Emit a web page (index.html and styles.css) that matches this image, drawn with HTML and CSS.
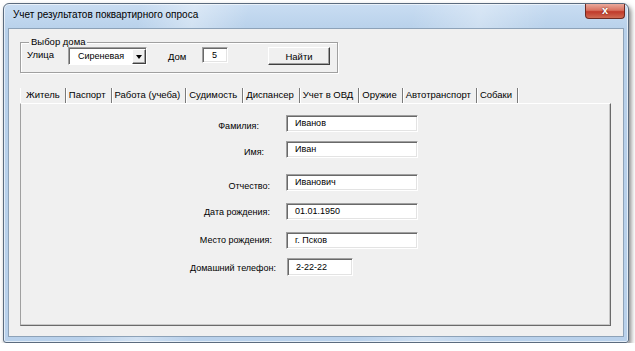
FILE: index.html
```html
<!DOCTYPE html>
<html lang="ru">
<head>
  <meta charset="UTF-8">
  <title>Учет результатов поквартирного опроса</title>
  <link rel="stylesheet" href="styles.css">
</head>
<body>
  <div class="window">
    <div class="titlebar">
      <span class="title">Учет результатов поквартирного опроса</span>
      <span class="close">x</span>
    </div>
    <div class="client">
      <!-- Выбор дома -->
      <div class="groupbox">
        <span class="groupbox-caption">Выбор дома</span>
        <div class="groupbox-row">
          <span class="lbl street-lbl">Улица</span>
          <div class="combo">
            <span class="combo-text">Сиреневая</span>
            <span class="combo-btn"><span class="arrow"></span></span>
          </div>
          <span class="lbl house-lbl">Дом</span>
          <div class="field house-field">5</div>
          <button class="btn find-btn">Найти</button>
        </div>
      </div>

      <!-- вкладки -->
      <div class="tabs">
        <span class="tab tab-first">Житель</span>
        <span class="tab">Паспорт</span>
        <span class="tab">Работа (учеба)</span>
        <span class="tab">Судимость</span>
        <span class="tab">Диспансер</span>
        <span class="tab">Учет в ОВД</span>
        <span class="tab">Оружие</span>
        <span class="tab">Автотранспорт</span>
        <span class="tab">Собаки</span>
      </div>
      <div class="tab-page">
        <div class="form-grid">
          <span class="lbl form-lbl lbl-surname">Фамилия:</span>
          <div class="field form-field">Иванов</div>

          <span class="lbl form-lbl lbl-name">Имя:</span>
          <div class="field form-field">Иван</div>

          <span class="lbl form-lbl lbl-patronymic">Отчество:</span>
          <div class="field form-field">Иванович</div>

          <span class="lbl form-lbl lbl-dob">Дата рождения:</span>
          <div class="field form-field">01.01.1950</div>

          <span class="lbl form-lbl lbl-pob">Место рождения:</span>
          <div class="field form-field">г. Псков</div>

          <span class="lbl form-lbl lbl-phone">Домашний телефон:</span>
          <div class="field form-field phone-field">2-22-22</div>
        </div>
      </div>
    </div>
  </div>
</body>
</html>
```

FILE: styles.css
```css
* {
  box-sizing: border-box;
}

body {
  margin: 0;
  background: #fff;
  font-family: "Liberation Sans", Arial, sans-serif;
  font-size: 9px;
  color: #000;
}

/* рамка окна в стиле Windows 7 */
.window {
  margin: 3px 0 0 3px;
  width: 626px;
  height: 340px;
  display: flex;
  flex-direction: column;
  padding: 0 4px 5px 4px;
  border: 1px solid #5b6b7e;
  border-radius: 6px 6px 3px 3px;
  background:
    linear-gradient(100deg, rgba(255,255,255,0) 20%, rgba(255,255,255,.35) 28%, rgba(255,255,255,0) 36%, rgba(255,255,255,0) 60%, rgba(255,255,255,.3) 70%, rgba(255,255,255,0) 80%),
    linear-gradient(180deg, #c9ddf2 0%, #b7d0ea 8%, #b9d1eb 100%);
  box-shadow: 2px 3px 5px rgba(0, 0, 0, 0.5), inset 0 0 0 1px rgba(255,255,255,.6);
}

.titlebar {
  height: 24px;
  display: flex;
  align-items: flex-start;
  padding-left: 5px;
}

.title {
  line-height: 22px;
  font-size: 10px;
}

.close {
  margin-left: auto;
  margin-right: -1px;
  width: 40px;
  height: 15px;
  border: 1px solid #6e2a22;
  border-top: none;
  border-radius: 0 0 4px 4px;
  background: linear-gradient(180deg, #e9a99c 0%, #d8715f 45%, #c0392a 55%, #cf6a52 100%);
  color: #fff;
  font-weight: bold;
  font-size: 11px;
  line-height: 12px;
  text-align: center;
  text-shadow: 0 0 2px #5a1a12;
}

.client {
  flex: 1;
  display: flex;
  flex-direction: column;
  background: #f0f0f0;
  border: 1px solid #8da2b8;
}

/* группа "Выбор дома" */
.groupbox {
  position: relative;
  margin: 13px 0 0 11px;
  width: 318px;
  height: 31px;
  border: 1px solid #a0a0a0;
  box-shadow: inset 1px 1px 0 #fff, 1px 1px 0 #fff;
}

.groupbox-caption {
  position: absolute;
  top: -7px;
  left: 8px;
  padding: 0 2px;
  background: #f0f0f0;
  line-height: 11px;
  font-size: 9.5px;
}

.groupbox-row {
  display: flex;
  align-items: flex-start;
  padding-left: 6px;
}

.lbl {
  line-height: 11px;
  white-space: nowrap;
}

.street-lbl {
  width: 41px;
  margin-top: 6px;
  font-size: 9.5px;
}

.house-lbl {
  width: 34px;
  margin: 8px 0 0 21px;
  font-size: 9.5px;
}

/* поля ввода с вдавленной рамкой */
.field {
  background: #fff;
  border-top: 1px solid #a0a0a0;
  border-left: 1px solid #a0a0a0;
  border-right: 1px solid #fff;
  border-bottom: 1px solid #fff;
  box-shadow: inset 1px 1px 0 #696969, inset -1px -1px 0 #e3e3e3;
  padding-left: 8px;
  line-height: 14px;
  white-space: nowrap;
}

.combo {
  width: 79px;
  height: 18px;
  margin-top: 4px;
  display: flex;
  background: #fff;
  border-top: 1px solid #a0a0a0;
  border-left: 1px solid #a0a0a0;
  border-right: 1px solid #fff;
  border-bottom: 1px solid #fff;
  box-shadow: inset 1px 1px 0 #696969;
}

.combo-text {
  padding-left: 9px;
  line-height: 16px;
}

.combo-btn {
  margin: 1px 0 0 auto;
  width: 14px;
  height: 15px;
  display: flex;
  align-items: center;
  justify-content: center;
  background: #f0f0f0;
  border-top: 1px solid #fff;
  border-left: 1px solid #fff;
  border-right: 1px solid #404040;
  border-bottom: 1px solid #404040;
  box-shadow: inset -1px -1px 0 #a0a0a0;
}

.arrow {
  width: 0;
  height: 0;
  border-left: 3.5px solid transparent;
  border-right: 3.5px solid transparent;
  border-top: 4px solid #000;
}

.house-field {
  width: 26px;
  height: 16px;
  margin-top: 4px;
  padding-left: 9px;
}

.btn {
  margin: 4px 0 0 40px;
  width: 62px;
  height: 18px;
  padding: 0;
  font-family: inherit;
  font-size: 9.5px;
  color: #000;
  background: #f0f0f0;
  border-top: 1px solid #fff;
  border-left: 1px solid #fff;
  border-right: 1px solid #404040;
  border-bottom: 1px solid #404040;
  box-shadow: inset -1px -1px 0 #a0a0a0;
}

/* вкладки */
.tabs {
  display: flex;
  margin: 15px 0 0 11px;
  height: 15px;
  font-size: 9.5px;
}

.tab {
  line-height: 14px;
  padding: 0 5px 0 3px;
  border-right: 1px solid #7a7a7a;
  box-shadow: 1px 0 0 #fff;
  white-space: nowrap;
}

.tab-first {
  padding-left: 5px;
  border-left: 1px solid #fff;
}

.tab-page {
  flex: 1;
  margin: 0 12px 10px 11px;
  border-top: 1px solid #fff;
  border-left: 1px solid #a0a0a0;
  border-right: 1px solid #6a6a6a;
  border-bottom: 1px solid #6a6a6a;
  box-shadow: inset -1px -1px 0 #c8c8c8;
}

.form-grid {
  display: grid;
  grid-template-columns: 249px auto;
  grid-template-rows: 26px 33px 29px 29px 26px 20px;
  column-gap: 16px;
  padding-top: 11px;
  align-items: start;
}

.form-lbl {
  text-align: right;
  margin-top: 6px;
}

.lbl-surname {
  padding-right: 11px;
}

.lbl-name {
  padding-right: 6px;
}

.lbl-patronymic {
  margin-top: 7px;
}

.lbl-dob {
  margin-top: 4px;
}

.lbl-pob {
  margin-top: 3px;
  margin-right: -2px;
}

.lbl-phone {
  margin-top: 5px;
  margin-right: -6px;
}

.form-field {
  width: 132px;
  height: 17px;
  line-height: 15px;
}

.phone-field {
  width: 66px;
  height: 18px;
  margin-left: 1px;
  line-height: 16px;
}
```
